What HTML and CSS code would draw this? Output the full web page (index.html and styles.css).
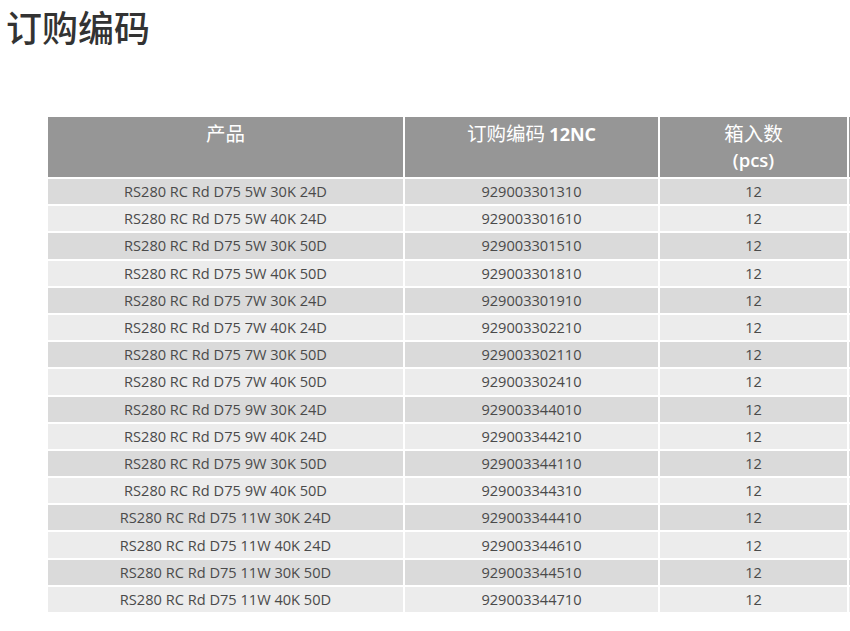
FILE: index.html
```html
<!DOCTYPE html>
<html lang="zh">
<head>
<meta charset="utf-8">
<link rel="stylesheet" href="styles.css">
</head>
<body>
<div class="page">
  <h1 class="title">订购编码</h1>
  <div class="table-wrap">
    <table class="codes">
      <colgroup>
        <col class="c-product">
        <col class="c-code">
        <col class="c-qty">
        <col class="c-extra">
      </colgroup>
      <thead>
        <tr>
          <th>产品</th>
          <th>订购编码 <b class="latin">12NC</b></th>
          <th>箱入数<br><span class="latin">(pcs)</span></th>
          <th></th>
        </tr>
      </thead>
      <tbody>
        <tr><td>RS280 RC Rd D75 5W 30K 24D</td><td>929003301310</td><td>12</td><td></td></tr>
        <tr><td>RS280 RC Rd D75 5W 40K 24D</td><td>929003301610</td><td>12</td><td></td></tr>
        <tr><td>RS280 RC Rd D75 5W 30K 50D</td><td>929003301510</td><td>12</td><td></td></tr>
        <tr><td>RS280 RC Rd D75 5W 40K 50D</td><td>929003301810</td><td>12</td><td></td></tr>
        <tr><td>RS280 RC Rd D75 7W 30K 24D</td><td>929003301910</td><td>12</td><td></td></tr>
        <tr><td>RS280 RC Rd D75 7W 40K 24D</td><td>929003302210</td><td>12</td><td></td></tr>
        <tr><td>RS280 RC Rd D75 7W 30K 50D</td><td>929003302110</td><td>12</td><td></td></tr>
        <tr><td>RS280 RC Rd D75 7W 40K 50D</td><td>929003302410</td><td>12</td><td></td></tr>
        <tr><td>RS280 RC Rd D75 9W 30K 24D</td><td>929003344010</td><td>12</td><td></td></tr>
        <tr><td>RS280 RC Rd D75 9W 40K 24D</td><td>929003344210</td><td>12</td><td></td></tr>
        <tr><td>RS280 RC Rd D75 9W 30K 50D</td><td>929003344110</td><td>12</td><td></td></tr>
        <tr><td>RS280 RC Rd D75 9W 40K 50D</td><td>929003344310</td><td>12</td><td></td></tr>
        <tr><td>RS280 RC Rd D75 11W 30K 24D</td><td>929003344410</td><td>12</td><td></td></tr>
        <tr><td>RS280 RC Rd D75 11W 40K 24D</td><td>929003344610</td><td>12</td><td></td></tr>
        <tr><td>RS280 RC Rd D75 11W 30K 50D</td><td>929003344510</td><td>12</td><td></td></tr>
        <tr><td>RS280 RC Rd D75 11W 40K 50D</td><td>929003344710</td><td>12</td><td></td></tr>
      </tbody>
    </table>
  </div>
</div>
</body>
</html>
```

FILE: styles.css
```css
html, body {
  margin: 0;
  padding: 0;
  background: #ffffff;
  overflow: hidden;
}

.page {
  width: 850px;
  overflow: hidden;
}

.title {
  margin: 4px 0 0 6px;
  font-family: "Noto Sans CJK SC", "Noto Sans", sans-serif;
  font-size: 36px;
  font-weight: 500;
  line-height: 44px;
  color: #333333;
}

.table-wrap {
  margin: 67px 0 0 46px;
  width: 1000px;
}

.codes {
  border-collapse: separate;
  border-spacing: 2px;
  table-layout: fixed;
  width: 955px;
  font-family: "Open Sans", "Noto Sans CJK SC", sans-serif;
}

.c-product { width: 355px; }
.c-code { width: 253px; }
.c-qty { width: 187px; }
.c-extra { width: 150px; }

.codes th {
  background: #969696;
  color: #ffffff;
  font-family: "Noto Sans CJK SC", "Open Sans", sans-serif;
  font-size: 19.5px;
  font-weight: 400;
  line-height: 26px;
  height: 60px;
  padding: 3px 4px 0;
  box-sizing: border-box;
  vertical-align: top;
  text-align: center;
}

.codes th .latin {
  font-family: "Open Sans", sans-serif;
  font-size: 18.5px;
  font-weight: 600;
}

.codes th b.latin {
  font-size: 18px;
  font-weight: 700;
}

.codes td {
  height: 25.2px;
  padding: 0 4px;
  box-sizing: border-box;
  font-size: 14.6px;
  line-height: 25px;
  color: #4a4a4a;
  text-align: center;
  white-space: nowrap;
}

.codes tbody tr:nth-child(odd) td {
  background: #dadada;
}

.codes tbody tr:nth-child(even) td {
  background: #ececec;
}
```
